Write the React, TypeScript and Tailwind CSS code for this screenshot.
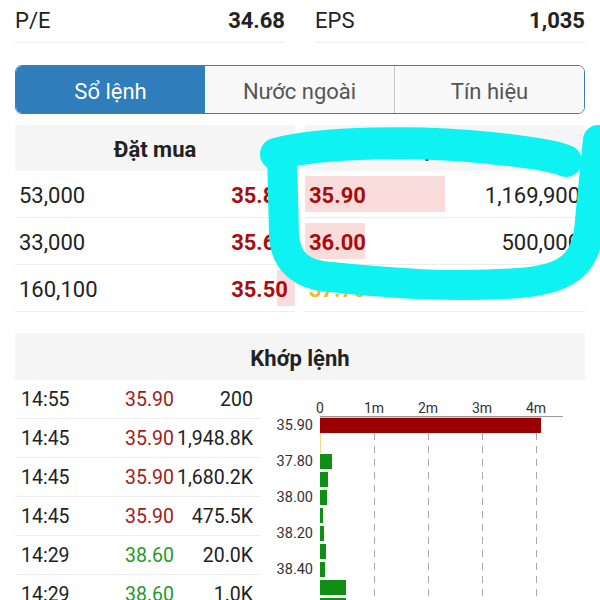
import React from "react";

type BookRow = { vol: string; price: string; bar: number; yellow?: boolean };

const bids: BookRow[] = [
  { vol: "53,000", price: "35.80", bar: 20 },
  { vol: "33,000", price: "35.60", bar: 14 },
  { vol: "160,100", price: "35.50", bar: 18 },
];

const asks: BookRow[] = [
  { price: "35.90", vol: "1,169,900", bar: 140 },
  { price: "36.00", vol: "500,000", bar: 60 },
  { price: "37.70", vol: "", bar: 0, yellow: true },
];

const trades = [
  { t: "14:55", p: "35.90", v: "200", up: false },
  { t: "14:45", p: "35.90", v: "1,948.8K", up: false },
  { t: "14:45", p: "35.90", v: "1,680.2K", up: false },
  { t: "14:45", p: "35.90", v: "475.5K", up: false },
  { t: "14:29", p: "38.60", v: "20.0K", up: true },
  { t: "14:29", p: "38.60", v: "1.0K", up: true },
];

// volume by price, index = row in the chart (18px apart)
const greenBars = [12, 8, 7, 3, 4, 6, 5, 26, 26];

function Stat({ label, value }: { label: string; value: string }) {
  return (
    <div className="flex-1 h-[42px] flex items-center justify-between pb-[3px] border-b border-[#efefef]">
      <span className="text-[22px] text-[#222]">{label}</span>
      <span className="text-[22px] font-bold text-[#222]">{value}</span>
    </div>
  );
}

function VolumeChart() {
  const ticks = ["0", "1m", "2m", "3m", "4m"];
  return (
    <svg width="325" height="220" className="block">
      {ticks.map((t, i) => (
        <text
          key={t}
          x={60 + i * 54}
          y={32}
          fontSize="14"
          fill="#333"
          textAnchor="middle"
          fontFamily="Roboto, sans-serif"
        >
          {t}
        </text>
      ))}
      <line x1="60" y1="35.5" x2="303" y2="35.5" stroke="#999" strokeWidth="1" />
      {[114, 168, 222, 276].map((x) => (
        <line
          key={x}
          x1={x + 0.5}
          y1="52"
          x2={x + 0.5}
          y2="220"
          stroke="#aaa"
          strokeWidth="1"
          strokeDasharray="7 6"
        />
      ))}
      <line x1="60.5" y1="52" x2="60.5" y2="72" stroke="#f0d890" strokeWidth="1" />
      <rect x="60" y="36" width="221" height="1.5" fill="#f2b8b8" />
      <rect x="60" y="37" width="221" height="15" fill="#990000" />
      {greenBars.map((w, i) => (
        <rect key={i} x="60" y={73 + i * 18} width={w} height="15" fill="#0f8f14" />
      ))}
      {["35.90", "37.80", "38.00", "38.20", "38.40"].map((l, i) => (
        <text
          key={l}
          x={53}
          y={49 + i * 36}
          fontSize="14.5"
          fill="#333"
          textAnchor="end"
          fontFamily="Roboto, sans-serif"
        >
          {l}
        </text>
      ))}
    </svg>
  );
}

export default function App() {
  return (
    <div className="relative w-[600px] h-[600px] overflow-hidden bg-white font-[Roboto,sans-serif] px-[15px] pt-[1px]">
      <div className="flex gap-[30px]">
        <Stat label="P/E" value="34.68" />
        <Stat label="EPS" value="1,035" />
      </div>

      <nav className="mt-[22px] h-[49px] flex rounded-[7px] border-[1.5px] border-[#3b7db5] overflow-hidden text-[22px]">
        <button className="flex-1 pt-[3px] bg-[#2f7dba] text-white">Sổ lệnh</button>
        <button className="flex-1 pt-[3px] bg-[#f9f9f9] text-[#555]">Nước ngoài</button>
        <button className="flex-1 pt-[3px] bg-[#f9f9f9] text-[#555] border-l border-[#c8c8c8]">
          Tín hiệu
        </button>
      </nav>

      <div className="mt-[11px] flex gap-[10px]">
        <div className="flex-1">
          <div className="h-[46px] pt-[3px] bg-[#f5f5f5] flex items-center justify-center text-[22px] font-bold text-[#222]">
            Đặt mua
          </div>
          {bids.map((r) => (
            <div
              key={r.vol}
              className="relative h-[47px] pt-[2px] flex items-center justify-between border-b border-[#ededed] text-[22px]"
            >
              <div
                className="absolute right-0 top-[5px] bottom-[5px] bg-[#fbdcdc]"
                style={{ width: r.bar }}
              />
              <span className="relative pl-[4px] text-[#222]">{r.vol}</span>
              <span className="relative pr-[7px] font-bold text-[#a80c0c]">{r.price}</span>
            </div>
          ))}
        </div>
        <div className="flex-1">
          <div className="h-[46px] pt-[3px] bg-[#f5f5f5] flex items-center justify-center text-[22px] font-bold text-[#222]">
            Đặt bán
          </div>
          {asks.map((r) => (
            <div
              key={r.price}
              className="relative h-[47px] pt-[2px] flex items-center justify-between border-b border-[#ededed] text-[22px]"
            >
              <div
                className="absolute left-0 top-[5px] bottom-[5px] bg-[#fbdcdc]"
                style={{ width: r.bar }}
              />
              <span
                className={
                  r.yellow
                    ? "relative pl-[4px] font-bold text-[#e8bb22]"
                    : "relative pl-[4px] font-bold text-[#a80c0c]"
                }
              >
                {r.price}
              </span>
              <span className="relative pr-[5px] text-[#222]">{r.vol}</span>
            </div>
          ))}
        </div>
      </div>

      <div className="mt-[21px] h-[47px] pt-[3px] bg-[#f5f5f5] flex items-center justify-center text-[22px] font-bold text-[#222]">
        Khớp lệnh
      </div>

      <div className="flex">
        <div className="w-[245px]">
          {trades.map((r, i) => (
            <div
              key={i}
              className="h-[39px] pt-[2px] flex items-center border-b border-[#ededed] text-[19.5px] text-[#222]"
            >
              <span className="flex-1 pl-[6px]">{r.t}</span>
              <span
                className={
                  r.up
                    ? "w-[80px] text-right text-[#1f9a28]"
                    : "w-[80px] text-right text-[#a01c1c]"
                }
              >
                {r.p}
              </span>
              <span className="w-[79px] pr-[7px] text-right box-content">{r.v}</span>
            </div>
          ))}
        </div>
        <div className="flex-1 pt-[1px]">
          <VolumeChart />
        </div>
      </div>

      {/* cyan hand-drawn marker over the ask side */}
      <svg
        className="absolute left-0 top-0 pointer-events-none"
        width="600"
        height="600"
      >
        <g
          fill="none"
          stroke="#0ff2f2"
          strokeLinecap="round"
          strokeLinejoin="round"
        >
          <path strokeWidth="32" d="M276 154 C 320 142, 420 140, 490 148 C 530 152, 555 156, 566 161" />
          <path
            strokeWidth="30"
            d="M282 152 L 284 235 Q 286 274 330 277 C 390 283, 450 288, 520 283 C 570 279, 588 262, 590 220 L 598 140"
          />
        </g>
      </svg>
    </div>
  );
}
